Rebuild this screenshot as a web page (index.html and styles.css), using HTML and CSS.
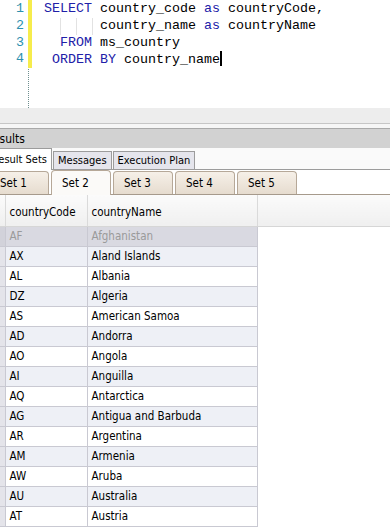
FILE: index.html
```html
<!DOCTYPE html>
<html>
<head>
<meta charset="utf-8">
<link rel="stylesheet" href="styles.css">
</head>
<body>
<div class="editor">
  <div class="nums">
    <div class="num">1</div>
    <div class="num">2</div>
    <div class="num">3</div>
    <div class="num">4</div>
  </div>
  <div class="margin"><div class="changed"></div></div>
  <div class="code">
    <div class="ln"><span class="kw">SELECT</span> country_code <span class="kw">as</span> countryCode,</div>
    <div class="ln"><span class="ind"></span><span class="ind guide"></span><span class="ind guide"></span><span class="ind half guide"></span>country_name <span class="kw">as</span> countryName</div>
    <div class="ln">  <span class="kw">FROM</span> ms_country</div>
    <div class="ln"> <span class="kw">ORDER BY</span> country_name<span class="caret"></span></div>
  </div>
</div>
<div class="hstrip"></div>
<div class="splitter"></div>
<div class="results-title"><span class="title-text">Results</span></div>
<div class="tabs">
  <div class="tab active first">Result Sets</div>
  <div class="tab">Messages</div>
  <div class="tab">Execution Plan</div>
</div>
<div class="settabs">
  <div class="settab first">Set 1</div>
  <div class="settab active">Set 2</div>
  <div class="settab">Set 3</div>
  <div class="settab">Set 4</div>
  <div class="settab">Set 5</div>
</div>
<table class="grid">
  <colgroup><col class="c0"><col class="c1"><col class="c2"><col></colgroup>
  <thead>
    <tr><th class="corner"></th><th>countryCode</th><th>countryName</th><th class="fill"></th></tr>
  </thead>
  <tbody>
    <tr class="sel"><td class="rh"></td><td>AF</td><td>Afghanistan</td><td class="empty"></td></tr>
    <tr class="alt"><td class="rh"></td><td>AX</td><td>Aland Islands</td><td class="empty"></td></tr>
    <tr><td class="rh"></td><td>AL</td><td>Albania</td><td class="empty"></td></tr>
    <tr class="alt"><td class="rh"></td><td>DZ</td><td>Algeria</td><td class="empty"></td></tr>
    <tr><td class="rh"></td><td>AS</td><td>American Samoa</td><td class="empty"></td></tr>
    <tr class="alt"><td class="rh"></td><td>AD</td><td>Andorra</td><td class="empty"></td></tr>
    <tr><td class="rh"></td><td>AO</td><td>Angola</td><td class="empty"></td></tr>
    <tr class="alt"><td class="rh"></td><td>AI</td><td>Anguilla</td><td class="empty"></td></tr>
    <tr><td class="rh"></td><td>AQ</td><td>Antarctica</td><td class="empty"></td></tr>
    <tr class="alt"><td class="rh"></td><td>AG</td><td>Antigua and Barbuda</td><td class="empty"></td></tr>
    <tr><td class="rh"></td><td>AR</td><td>Argentina</td><td class="empty"></td></tr>
    <tr class="alt"><td class="rh"></td><td>AM</td><td>Armenia</td><td class="empty"></td></tr>
    <tr><td class="rh"></td><td>AW</td><td>Aruba</td><td class="empty"></td></tr>
    <tr class="alt"><td class="rh"></td><td>AU</td><td>Australia</td><td class="empty"></td></tr>
    <tr><td class="rh"></td><td>AT</td><td>Austria</td><td class="empty"></td></tr>
    <tr class="alt"><td class="rh"></td><td></td><td></td><td class="empty"></td></tr>
  </tbody>
</table>
</body>
</html>
```

FILE: styles.css
```css
* { box-sizing: border-box; }
html, body { margin: 0; padding: 0; }
body {
  width: 390px;
  height: 527px;
  overflow: hidden;
  background: #ffffff;
  font-family: "DejaVu Sans Condensed", "DejaVu Sans", sans-serif;
  font-stretch: condensed;
  font-size: 11px;
  color: #000;
}

/* ---------- editor ---------- */
.editor {
  display: flex;
  height: 108px;
  background: #fff;
}
.nums {
  flex: none;
  width: 28px;
  padding-top: 1px;
  padding-right: 4px;
  text-align: right;
  font-family: "Liberation Mono", monospace;
  font-size: 13.33px;
  color: #2b91af;
}
.num { height: 16.8px; line-height: 16.8px; }
.margin {
  flex: none;
  width: 3px;
  border-left: 1px dotted #6f8f8f;
}
.changed {
  height: 68px;
  width: 4px;
  margin-left: -1px;
  background: #f6ec4c;
}
.code {
  flex: 1;
  padding-top: 1px;
  padding-left: 13px;
  font-family: "Liberation Mono", monospace;
  font-size: 13.33px;
  color: #000;
}
.ln { height: 16.8px; line-height: 16.8px; white-space: pre; }
.kw { color: #2020a8; }
.ind {
  display: inline-block;
  width: 16px;
  height: 16.8px;
  vertical-align: top;
}
.ind.half { width: 8px; }
.ind.guide { box-shadow: inset 1px 0 0 #e2e2e2; }
.caret {
  display: inline-block;
  width: 2px;
  height: 15px;
  background: #000;
  vertical-align: -3px;
}

/* ---------- splitter area ---------- */
.hstrip {
  height: 15px;
  background: #ededed;
}
.splitter {
  height: 6px;
  background: #f6f6f6;
  border-top: 1px solid #c6c6c6;
  border-bottom: 1px solid #a9a9a9;
}
.results-title {
  height: 19px;
  background: #d2d2d2;
  display: flex;
  align-items: center;
  font-size: 12px;
  white-space: nowrap;
}
.title-text { margin-left: -14px; }

/* ---------- tabs ---------- */
.tabs {
  display: flex;
  align-items: flex-end;
  height: 22px;
  background: #fafafa;
  border-bottom: 1px solid #9c9c9c;
}
.tab {
  flex: none;
  height: 18px;
  padding: 0 4px;
  margin-right: 1px;
  display: flex;
  align-items: center;
  white-space: nowrap;
  background: #e5e5ec;
  border: 1px solid #9c9c9c;
  border-bottom: none;
}
.tab.active {
  background: #ffffff;
  margin-bottom: -1px;
  height: 22px;
}
.tab.first {
  margin-left: -8px;
  width: 60px;
  justify-content: flex-end;
  padding: 0 4px 0 0;
}

.settabs {
  display: flex;
  align-items: flex-end;
  gap: 2px;
  height: 25px;
  background: #ffffff;
  border-bottom: 1px solid #a69a8c;
}
.settab {
  flex: none;
  width: 60px;
  height: 23px;
  padding-left: 10px;
  display: flex;
  align-items: center;
  white-space: nowrap;
  background: linear-gradient(#f6f0e8, #e6dccf);
  border: 1px solid #b6a898;
  border-bottom: none;
  border-radius: 4px 4px 0 0;
  font-size: 11.5px;
}
.settab.first { margin-left: -11px; }
.settab.active {
  background: #fbfaf8;
  margin-bottom: -1px;
  height: 25px;
}

/* ---------- grid ---------- */
.grid {
  width: 390px;
  table-layout: fixed;
  border-collapse: collapse;
  font-size: 11.5px;
}
.c0 { width: 5px; }
.c1 { width: 82px; }
.c2 { width: 170px; }
.grid th {
  height: 31px;
  padding: 4px 0 0 4px;
  text-align: left;
  font-weight: normal;
  background: linear-gradient(#fbfbfb, #efefef);
  border-right: 1px solid #dadada;
  border-bottom: 1px solid #d6d6d6;
  white-space: nowrap;
  overflow: hidden;
}
.grid th.corner { padding: 0; }
.grid th.fill { border-right: none; }
.grid td {
  height: 20px;
  padding: 0 0 0 4px;
  border: 1px solid #c9c9d2;
  white-space: nowrap;
  overflow: hidden;
  background: #ffffff;
}
.grid td.rh {
  padding: 0;
  background: #e4e4ea;
  border-left: none;
}
.grid td.empty {
  border: none;
  border-left: 1px solid #c9c9d2;
  background: #ffffff;
}
.grid tr.alt td { background: #eef0f6; }
.grid tr.alt td.rh { background: #e4e4ea; }
.grid tr.alt td.empty { background: #fff; }
.grid tr.sel td { background: #d9d9e1; color: #9a9a9a; }
.grid tr.sel td.rh { background: #d2d2da; }
.grid tr.sel td.empty { background: #fff; }
```
